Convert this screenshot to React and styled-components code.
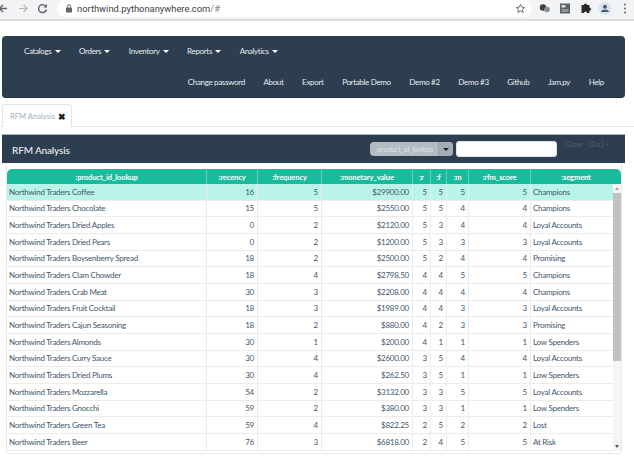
import styled, { createGlobalStyle } from "styled-components";

const GlobalStyle = createGlobalStyle`
    html, body {
        margin: 0;
        padding: 0;
        background: #fff;
        font-family: "Lato", "Liberation Sans", sans-serif;
    }
`

const Page = styled.div`
    width: 634px;
    height: 460px;
    overflow: hidden;
`

const BrowserBar = styled.div`
    height: 19px;
    display: flex;
    align-items: flex-start;
    background: #f1f3f4;
    border-bottom: 2px solid #dadce0;
`

const NavIcons = styled.div`
    width: 57px;
    height: 19px;
    flex: none;
`

const Omnibox = styled.div`
    width: 475px;
    height: 17px;
    flex: none;
    display: flex;
    align-items: center;
    background: #fff;
    border-radius: 9px;
    padding-left: 8px;
    box-sizing: border-box;
    position: relative;
    color: #3c4043;
    font-size: 9.35px;
    font-family: "Roboto", sans-serif;
`

const Hash = styled.span`
    color: #80868b;
`

const StarSlot = styled.div`
    position: absolute;
    right: 6px;
    top: 3px;
    line-height: 0;
`

const ExtIcons = styled.div`
    flex: 1;
    height: 19px;
    line-height: 0;
`

const Navbar = styled.nav`
    margin: 15px 9px 0 2px;
    height: 62px;
    background: #2c3e50;
    border-radius: 4px;
    border-bottom: 1px solid #1a2a3a;
    box-sizing: border-box;
    display: flex;
    flex-direction: column;
`

const NavRow = styled.div`
    height: 31px;
    display: flex;
    align-items: center;
    justify-content: ${props => (props.$end ? "flex-end" : "flex-start")};
    padding: ${props => (props.$end ? "0 21px 0 0" : "0 0 0 22px")};
    gap: 18.6px;
    color: #e6ebef;
    font-size: 8px;
    letter-spacing: -0.33px;
`

const NavItem = styled.span`
    display: flex;
    align-items: center;
    white-space: nowrap;
`

const Caret = styled.i`
    display: inline-block;
    width: 0;
    height: 0;
    margin-left: 3px;
    border-top: 3px solid ${props => props.$color || "#fff"};
    border-left: 3px solid transparent;
    border-right: 3px solid transparent;
`

const TabStrip = styled.div`
    margin-top: 6px;
    height: 23px;
    padding-left: 2px;
    border-bottom: 1px solid #e4e4e4;
    box-sizing: border-box;
    display: flex;
`

const Tab = styled.div`
    width: 70px;
    height: 23px;
    box-sizing: border-box;
    background: #fff;
    border: 1px solid #e4e4e4;
    border-bottom: none;
    border-radius: 3px 3px 0 0;
    padding-left: 7px;
    display: flex;
    align-items: center;
    gap: 3px;
    color: #a3afb7;
    font-size: 7.6px;
`

const TabClose = styled.span`
    color: #1c1c1c;
    font-size: 9px;
    font-weight: 900;
    line-height: 1;
`

const Modal = styled.section`
    margin: 7px 9px 0 2px;
    width: 623px;
`

const ModalHeader = styled.header`
    height: 29px;
    background: #2c3e50;
    border-top: 1px solid #a9b1b8;
    box-sizing: border-box;
    display: flex;
    align-items: center;
    padding: 0 0 0 10px;
    color: #ecf0f1;
`

const ModalTitle = styled.h4`
    margin: 0;
    padding-top: 1px;
    flex: 1;
    font-size: 10px;
    font-weight: 500;
    letter-spacing: -0.15px;
`

const SearchSelect = styled.div`
    width: 83px;
    height: 14px;
    flex: none;
    display: flex;
    align-items: stretch;
    border-radius: 4px;
    overflow: hidden;
    background: #b4bcc2;
    color: #dfe4e7;
    font-size: 6.9px;
`

const SelectLabel = styled.span`
    flex: 1;
    display: flex;
    align-items: center;
    padding-left: 7px;
`

const SelectCaret = styled.span`
    width: 14px;
    display: flex;
    align-items: center;
    justify-content: center;
    background: #a4adb4;
    border-left: 1px solid #9aa3aa;
`

const SearchInput = styled.input`
    width: 101px;
    height: 16px;
    flex: none;
    box-sizing: border-box;
    margin: 0 8px 0 3px;
    padding: 0;
    border: 1px solid #dfe4e7;
    border-radius: 3px;
    background: #fff;
`

const CloseLink = styled.span`
    width: 60px;
    flex: none;
    margin-bottom: 9px;
    color: #4c6074;
    font-size: 7.2px;
    white-space: nowrap;
`

const Panel = styled.div`
    margin: 0 3px 0 4px;
    height: 291px;
    box-sizing: border-box;
    padding: 6px 0 0 0;
    border: 1px solid #e9e9e9;
    border-top: none;
    border-radius: 0 0 4px 4px;
`

const HeadRow = styled.div`
    display: grid;
    grid-template-columns: 199px 51px 64px 91px 18px 16px 22px 62px 91px;
    height: 15px;
    background: #18bc9c;
    border-radius: 5px 5px 0 0;
    overflow: hidden;
`

const HeadCell = styled.div`
    display: flex;
    align-items: center;
    justify-content: center;
    color: #fff;
    font-size: 7.6px;
    font-weight: 700;
    letter-spacing: -0.15px;
    border-left: ${props => (props.$first ? "none" : "1px solid #5fd3bd")};
    box-sizing: border-box;
    white-space: nowrap;
`

const TableBody = styled.div`
    display: flex;
    height: 267px;
    overflow: hidden;
`

const Rows = styled.div`
    width: 606px;
    flex: none;
`

const Row = styled.div`
    display: grid;
    grid-template-columns: 199px 51px 64px 91px 18px 16px 22px 62px 83px;
    height: 16.67px;
    box-sizing: border-box;
    border-bottom: 1px solid #ececec;
    background: ${props => (props.$selected ? "#b8f5e8" : "#fff")};
`

const Cell = styled.div`
    display: flex;
    align-items: center;
    justify-content: ${props => (props.$right ? "flex-end" : "flex-start")};
    padding: 0 3px 0 2px;
    box-sizing: border-box;
    border-left: ${props => (props.$first ? "none" : "1px solid #ececec")};
    color: #44566a;
    font-size: 8px;
    letter-spacing: -0.25px;
    white-space: nowrap;
    overflow: hidden;
`

const Scrollbar = styled.div`
    width: 8px;
    flex: none;
    background: #f5f5f5;
    display: flex;
    flex-direction: column;
    align-items: center;
`

const ScrollArrow = styled.i`
    width: 0;
    height: 0;
    margin: 3px 0;
    border-left: 2px solid transparent;
    border-right: 2px solid transparent;
    border-${props => (props.$down ? "top" : "bottom")}: 3px solid ${props => (props.$down ? "#505050" : "#a3a3a3")};
`

const ScrollThumb = styled.div`
    width: 100%;
    height: 168px;
    margin-bottom: auto;
    background: #c1c1c1;
`

const columns = [":product_id_lookup", ":recency", ":frequency", ":monetary_value", ":r", ":f", ":m", ":rfm_score", ":segment"]

const data = [
    ["Coffee", 16, 5, "$29900.00", 5, 5, 5, 5, "Champions"],
    ["Chocolate", 15, 5, "$2550.00", 5, 5, 4, 4, "Champions"],
    ["Dried Apples", 0, 2, "$2120.00", 5, 3, 4, 4, "Loyal Accounts"],
    ["Dried Pears", 0, 2, "$1200.00", 5, 3, 3, 3, "Loyal Accounts"],
    ["Boysenberry Spread", 18, 2, "$2500.00", 5, 2, 4, 4, "Promising"],
    ["Clam Chowder", 18, 4, "$2798.50", 4, 4, 5, 5, "Champions"],
    ["Crab Meat", 30, 3, "$2208.00", 4, 4, 4, 4, "Champions"],
    ["Fruit Cocktail", 18, 3, "$1989.00", 4, 4, 3, 3, "Loyal Accounts"],
    ["Cajun Seasoning", 18, 2, "$880.00", 4, 2, 3, 3, "Promising"],
    ["Almonds", 30, 1, "$200.00", 4, 1, 1, 1, "Low Spenders"],
    ["Curry Sauce", 30, 4, "$2600.00", 3, 5, 4, 4, "Loyal Accounts"],
    ["Dried Plums", 30, 4, "$262.50", 3, 5, 1, 1, "Low Spenders"],
    ["Mozzarella", 54, 2, "$3132.00", 3, 3, 5, 5, "Loyal Accounts"],
    ["Gnocchi", 59, 2, "$380.00", 3, 3, 1, 1, "Low Spenders"],
    ["Green Tea", 59, 4, "$822.25", 2, 5, 2, 2, "Lost"],
    ["Beer", 76, 3, "$6818.00", 2, 4, 5, 5, "At Risk"],
]

const BackForward = () => (
    <svg width="57" height="19" viewBox="0 0 57 19" fill="none">
        <path d="M7 8.500H0M3 5L-0.5 8.500L3 12" stroke="#5f6368" strokeWidth="1.4" />
        <path d="M19 8.500H27M23.500 5L27 8.500L23.500 12" stroke="#b4b7ba" strokeWidth="1.2" />
        <path d="M46 6.500A4 4 0 1 0 46.500 9.500" stroke="#5f6368" strokeWidth="1.4" />
        <path d="M47 4V7.500H43.500Z" fill="#5f6368" />
    </svg>
)

const Lock = () => (
    <svg width="8" height="9" viewBox="0 0 8 9" style={{ marginRight: 4 }}>
        <rect x="1" y="3.500" width="6" height="5" rx="0.8" fill="#5f6368" />
        <path d="M2.400 3.500V2.400A1.600 1.600 0 0 1 5.600 2.400V3.500" stroke="#5f6368" fill="none" />
    </svg>
)

const Star = () => (
    <svg width="11" height="11" viewBox="0 0 24 24" fill="none" stroke="#5f6368" strokeWidth="2">
        <path d="M12 3l2.700 6.100 6.600.6-5 4.400 1.500 6.500L12 17.200 6.200 20.600l1.500-6.500-5-4.400 6.600-.6z" />
    </svg>
)

const Extensions = () => (
    <svg width="102" height="19" viewBox="0 0 102 19">
        <circle cx="11" cy="7.500" r="3.200" fill="#3c4043" />
        <circle cx="15" cy="9.500" r="2.800" fill="#8a8d90" />
        <rect x="28" y="3.500" width="10" height="10" fill="#5b6166" />
        <rect x="29.500" y="5" width="4" height="2.500" fill="#d5d8da" />
        <rect x="29.500" y="9" width="7" height="3" fill="#8d9296" />
        <path d="M49.500 6h2.500a1.500 1.500 0 0 1 3 0h2.500v2.500a1.500 1.500 0 0 1 0 3V14h-2.500a1.500 1.500 0 0 0-3 0h-2.500z" fill="#26282a" transform="translate(0 -1)" />
        <circle cx="73" cy="8.500" r="6.500" fill="#d9e4f2" />
        <circle cx="73" cy="6.800" r="2" fill="#4a5a70" />
        <path d="M69 12c.4-2 2.200-2.600 4-2.600s3.600.6 4 2.600z" fill="#4a5a70" />
        <circle cx="93" cy="4.500" r="1" fill="#5f6368" />
        <circle cx="93" cy="8.500" r="1" fill="#5f6368" />
        <circle cx="93" cy="12.500" r="1" fill="#5f6368" />
    </svg>
)

const App = () => {
    return (
        <Page>
            <GlobalStyle />
            <BrowserBar>
                <NavIcons><BackForward /></NavIcons>
                <Omnibox>
                    <Lock />
                    northwind.pythonanywhere.com<Hash>/#</Hash>
                    <StarSlot><Star /></StarSlot>
                </Omnibox>
                <ExtIcons><Extensions /></ExtIcons>
            </BrowserBar>
            <Navbar>
                <NavRow>
                    {["Catalogs", "Orders", "Inventory", "Reports", "Analytics"].map(name => (
                        <NavItem key={name}>{name}<Caret /></NavItem>
                    ))}
                </NavRow>
                <NavRow $end>
                    {["Change password", "About", "Export", "Portable Demo", "Demo #2", "Demo #3", "Github", "Jam.py", "Help"].map(name => (
                        <NavItem key={name}>{name}</NavItem>
                    ))}
                </NavRow>
            </Navbar>
            <TabStrip>
                <Tab>RFM Analysis <TabClose>✖</TabClose></Tab>
            </TabStrip>
            <Modal>
                <ModalHeader>
                    <ModalTitle>RFM Analysis</ModalTitle>
                    <SearchSelect>
                        <SelectLabel>product_id_lookup</SelectLabel>
                        <SelectCaret><Caret $color="#222" style={{ marginLeft: 0 }} /></SelectCaret>
                    </SearchSelect>
                    <SearchInput />
                    <CloseLink>Close - [Esc] ×</CloseLink>
                </ModalHeader>
                <Panel>
                    <HeadRow>
                        {columns.map((col, i) => (
                            <HeadCell key={col} $first={i === 0}>{col}</HeadCell>
                        ))}
                    </HeadRow>
                    <TableBody>
                        <Rows>
                            {data.map((row, r) => (
                                <Row key={row[0]} $selected={r === 0}>
                                    {row.map((value, i) => (
                                        <Cell key={i} $first={i === 0} $right={i > 0 && i < 8}>
                                            {i === 0 ? `Northwind Traders ${value}` : value}
                                        </Cell>
                                    ))}
                                </Row>
                            ))}
                        </Rows>
                        <Scrollbar>
                            <ScrollArrow />
                            <ScrollThumb />
                            <ScrollArrow $down />
                        </Scrollbar>
                    </TableBody>
                </Panel>
            </Modal>
        </Page>
    )
}

export default App;
